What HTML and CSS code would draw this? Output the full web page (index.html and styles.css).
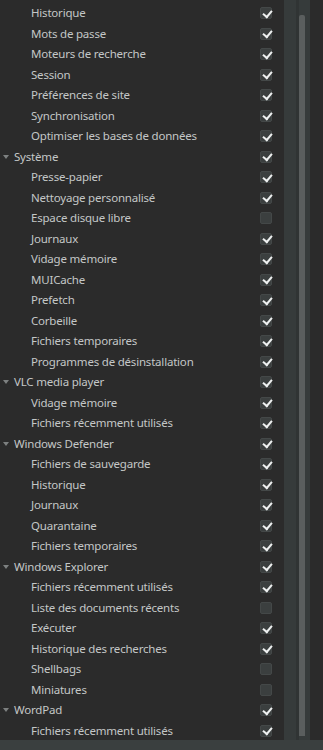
FILE: index.html
```html
<!DOCTYPE html>
<html lang="fr">
<head>
<meta charset="utf-8">
<title>Nettoyage</title>
<link rel="stylesheet" href="styles.css">
</head>
<body>
<div class="window">
  <div class="main">
    <ul class="tree">
      <li class="row child"><span class="label">Historique</span><span class="cb on"></span></li>
      <li class="row child"><span class="label">Mots de passe</span><span class="cb on"></span></li>
      <li class="row child"><span class="label">Moteurs de recherche</span><span class="cb on"></span></li>
      <li class="row child"><span class="label">Session</span><span class="cb on"></span></li>
      <li class="row child"><span class="label">Préférences de site</span><span class="cb on"></span></li>
      <li class="row child"><span class="label">Synchronisation</span><span class="cb on"></span></li>
      <li class="row child"><span class="label">Optimiser les bases de données</span><span class="cb on"></span></li>
      <li class="row parent"><span class="arrow"></span><span class="label">Système</span><span class="cb on"></span></li>
      <li class="row child"><span class="label">Presse-papier</span><span class="cb on"></span></li>
      <li class="row child"><span class="label">Nettoyage personnalisé</span><span class="cb on"></span></li>
      <li class="row child"><span class="label">Espace disque libre</span><span class="cb"></span></li>
      <li class="row child"><span class="label">Journaux</span><span class="cb on"></span></li>
      <li class="row child"><span class="label">Vidage mémoire</span><span class="cb on"></span></li>
      <li class="row child"><span class="label">MUICache</span><span class="cb on"></span></li>
      <li class="row child"><span class="label">Prefetch</span><span class="cb on"></span></li>
      <li class="row child"><span class="label">Corbeille</span><span class="cb on"></span></li>
      <li class="row child"><span class="label">Fichiers temporaires</span><span class="cb on"></span></li>
      <li class="row child"><span class="label">Programmes de désinstallation</span><span class="cb on"></span></li>
      <li class="row parent"><span class="arrow"></span><span class="label">VLC media player</span><span class="cb on"></span></li>
      <li class="row child"><span class="label">Vidage mémoire</span><span class="cb on"></span></li>
      <li class="row child"><span class="label">Fichiers récemment utilisés</span><span class="cb on"></span></li>
      <li class="row parent"><span class="arrow"></span><span class="label">Windows Defender</span><span class="cb on"></span></li>
      <li class="row child"><span class="label">Fichiers de sauvegarde</span><span class="cb on"></span></li>
      <li class="row child"><span class="label">Historique</span><span class="cb on"></span></li>
      <li class="row child"><span class="label">Journaux</span><span class="cb on"></span></li>
      <li class="row child"><span class="label">Quarantaine</span><span class="cb on"></span></li>
      <li class="row child"><span class="label">Fichiers temporaires</span><span class="cb on"></span></li>
      <li class="row parent"><span class="arrow"></span><span class="label">Windows Explorer</span><span class="cb on"></span></li>
      <li class="row child"><span class="label">Fichiers récemment utilisés</span><span class="cb on"></span></li>
      <li class="row child"><span class="label">Liste des documents récents</span><span class="cb"></span></li>
      <li class="row child"><span class="label">Exécuter</span><span class="cb on"></span></li>
      <li class="row child"><span class="label">Historique des recherches</span><span class="cb on"></span></li>
      <li class="row child"><span class="label">Shellbags</span><span class="cb"></span></li>
      <li class="row child"><span class="label">Miniatures</span><span class="cb"></span></li>
      <li class="row parent"><span class="arrow"></span><span class="label">WordPad</span><span class="cb on"></span></li>
      <li class="row child"><span class="label">Fichiers récemment utilisés</span><span class="cb on"></span></li>
    </ul>
    <div class="gutter"></div>
    <div class="scrollbar"><div class="thumb"></div></div>
  </div>
  <div class="statusbar"></div>
</div>
</body>
</html>
```
FILE: styles.css
```css
html, body {
  margin: 0;
  padding: 0;
  background: #2b2b2b;
}
body {
  font-family: "Noto Sans", "Open Sans", sans-serif;
  font-size: 11.5px;
  letter-spacing: -0.2px;
  color: #c4c7c7;
}
.window {
  width: 323px;
  height: 750px;
  display: flex;
  flex-direction: column;
  overflow: hidden;
}
.main {
  flex: 1;
  display: flex;
  min-height: 0;
  overflow: hidden;
}
.tree {
  list-style: none;
  margin: 0;
  padding: 2.75px 0 0 0;
  width: 284px;
  flex: none;
}
.row {
  height: 20.51px;
  display: flex;
  align-items: center;
  position: relative;
  padding-right: 12px;
}
.row.child { padding-left: 31px; }
.row.parent { padding-left: 14px; }
.label {
  flex: 1;
  white-space: nowrap;
  line-height: 16px;
}
.arrow {
  position: absolute;
  left: 3px;
  top: 50%;
  margin-top: -2px;
  width: 0;
  height: 0;
  border-left: 3.5px solid transparent;
  border-right: 3.5px solid transparent;
  border-top: 4px solid #7d8080;
}
.cb {
  width: 12px;
  height: 12px;
  border-radius: 2px;
  background: #3b3f3f;
  box-sizing: border-box;
  border: 1px solid #444848;
  flex: none;
  position: relative;
}
.cb.on::after {
  content: "";
  position: absolute;
  width: 7px;
  height: 4px;
  border-left: 2px solid #eef0f0;
  border-bottom: 2px solid #eef0f0;
  transform: rotate(-50deg);
  transform-origin: center;
  top: 1.5px;
  left: 1.5px;
}
.gutter {
  width: 12px;
  background: #363b3b;
  flex: none;
}
.scrollbar {
  width: 14px;
  flex: none;
  background: #363b3b;
  border-left: 3px solid #303434;
  box-sizing: border-box;
  padding: 15px 5px 4px 0;
  display: flex;
}
.thumb {
  width: 6px;
  flex: 1;
  background: #5a5e5e;
  border-radius: 2px 2px 0 0;
}
.statusbar {
  height: 10px;
  flex: none;
  background: #3a3f3f;
}
```
